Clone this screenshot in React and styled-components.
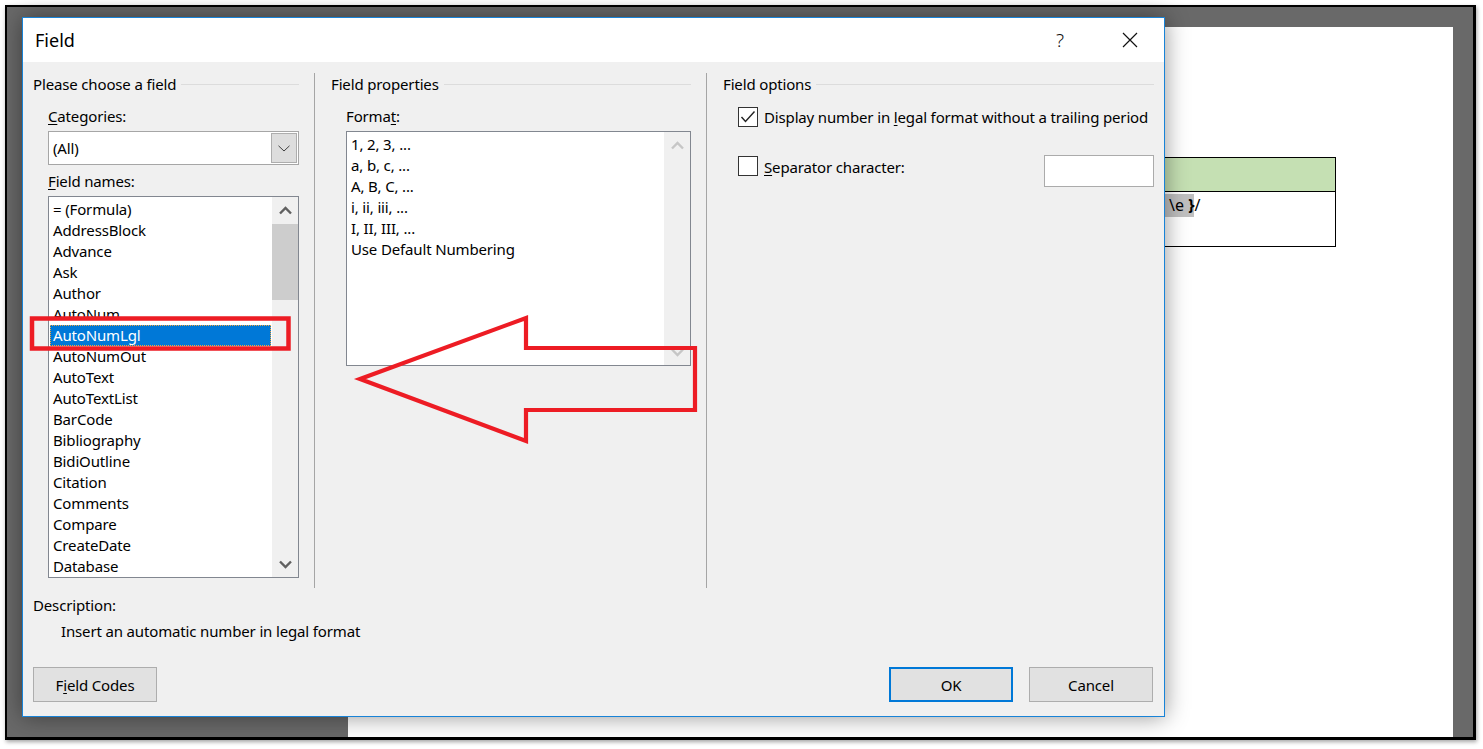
import React from 'react';
import styled, { createGlobalStyle } from 'styled-components';

const GlobalStyle = createGlobalStyle`
  html, body { margin: 0; padding: 0; background: #ffffff; }
  body {
    width: 1483px; height: 749px; overflow: hidden;
    font-family: "Noto Sans", "Open Sans", sans-serif;
  }
  * { box-sizing: border-box; }
`;

const Screen = styled.div`
  position: relative;
  width: 1483px;
  height: 749px;
  padding: 5px 0 0 5px;
`;

const Frame = styled.div`
  position: relative;
  display: flex;
  width: 1471px;
  height: 735px;
  border: 2px solid #000;
  border-right-width: 3px;
  border-bottom-width: 3px;
  background: #696969;
  box-shadow: 1px 2px 4px rgba(0, 0, 0, 0.35);
  padding: 20px 20px 0 341px;
`;

const Page = styled.div`
  flex: 1;
  background: #ffffff;
  display: flex;
  justify-content: flex-end;
  align-items: flex-start;
  padding: 130px 117px 0 0;
`;

const DocTable = styled.table`
  border-collapse: collapse;
  width: 536px;
  font-family: "Noto Sans", sans-serif;
  font-size: 16px;
  color: #000;
`;

const HeadCell = styled.td`
  height: 34px;
  padding: 0;
  background: #c5e0b3;
  border: 1px solid #000;
`;

const BodyCell = styled.td`
  height: 55px;
  padding: 2px 0 0 0;
  vertical-align: top;
  border: 1px solid #000;
  width: ${p => p.$w || 'auto'};
`;

const FieldShade = styled.span`
  display: inline-block;
  background: #c0c0c0;
  padding: 0 0 0 4px;
  line-height: 23px;
  b { font-weight: 700; }
`;

const Dialog = styled.div`
  position: absolute;
  left: 15px;
  top: 10px;
  width: 1143px;
  height: 700px;
  border: 1px solid #1883d7;
  background: #f0f0f0;
  box-shadow: 0 0 22px rgba(0, 0, 0, 0.42);
  display: flex;
  flex-direction: column;
  font-family: "Noto Sans", "Open Sans", sans-serif;
  font-size: 15px;
  letter-spacing: -0.15px;
  color: #000;
`;

const TitleBar = styled.div`
  height: 44px;
  flex: none;
  background: #ffffff;
  display: flex;
  align-items: center;
  padding: 0 11px 0 12px;
`;

const Title = styled.div`
  font-size: 18px;
  letter-spacing: 0;
  flex: 1;
`;

const TitleButton = styled.div`
  width: 46px;
  height: 44px;
  display: flex;
  align-items: center;
  justify-content: center;
  font-size: 19px;
  font-weight: 300;
  color: #111;
  margin-left: ${p => p.$ml || 0}px;
`;

const Body = styled.div`
  flex: 1;
  display: flex;
  flex-direction: column;
  padding: 11px 10px 13px 10px;
`;

const Columns = styled.div`
  display: flex;
  height: 515px;
`;

const Group = styled.div`
  display: flex;
  flex-direction: column;
  min-width: 0;
  width: ${p => (p.$w ? `${p.$w}px` : 'auto')};
  flex: ${p => (p.$w ? 'none' : '1 1 0')};
`;

const GroupHeader = styled.div`
  display: flex;
  align-items: center;
  line-height: 20px;
  margin-top: 1px;
  white-space: nowrap;
  &::after {
    content: "";
    flex: 1;
    height: 1px;
    background: #dcdcdc;
    margin-left: 5px;
  }
`;

const Divider = styled.div`
  width: 1px;
  flex: none;
  background: #a5a5a5;
  margin: 0 16px 0 15px;
`;

const Label = styled.div`
  line-height: 20px;
  margin: ${p => p.$mt || 0}px 0 0 15px;
  u { text-decoration: underline; text-underline-offset: 2px; }
`;

const Combo = styled.div`
  margin: 5px 0 0 15px;
  height: 34px;
  border: 1px solid #a6a6a6;
  background: #ffffff;
  display: flex;
  align-items: center;
  padding: 0 1px 0 4px;
`;

const ComboText = styled.div`
  flex: 1;
  line-height: 20px;
`;

const DropButton = styled.div`
  width: 26px;
  height: 30px;
  border: 1px solid #adadad;
  background: #dddddd;
  display: flex;
  align-items: center;
  justify-content: center;
`;

const ListBox = styled.div`
  margin: 5px 0 0 15px;
  height: ${p => p.$h}px;
  border: 1px solid #828790;
  background: #ffffff;
  display: flex;
  overflow: hidden;
`;

const Items = styled.div`
  flex: 1;
  padding: 2px 1px 0 1px;
  overflow: hidden;
`;

const Item = styled.div`
  height: 21px;
  line-height: 19px;
  padding-left: 2px;
  border: 1px ${p => (p.$sel ? 'dotted #f3a53c' : 'solid transparent')};
  background: ${p => (p.$sel ? '#0078d7' : 'transparent')};
  color: ${p => (p.$sel ? '#ffffff' : '#000000')};
  white-space: nowrap;
`;

const ScrollBar = styled.div`
  width: 26px;
  flex: none;
  background: #f0f0f0;
  display: flex;
  flex-direction: column;
`;

const ScrollButton = styled.div`
  height: 26px;
  flex: none;
  display: flex;
  align-items: center;
  justify-content: center;
`;

const Track = styled.div`
  flex: 1;
  padding-top: ${p => p.$offset || 0}px;
`;

const Thumb = styled.div`
  height: ${p => p.$h}px;
  background: #cdcdcd;
`;

const CheckRow = styled.div`
  display: flex;
  align-items: flex-start;
  margin: ${p => p.$mt}px 0 0 15px;
`;

const CheckBox = styled.div`
  width: 20px;
  height: 20px;
  flex: none;
  border: 1px solid #333333;
  background: #ffffff;
  margin-top: ${p => p.$mt || 0}px;
  display: flex;
  align-items: center;
  justify-content: center;
`;

const CheckLabel = styled.div`
  line-height: 20px;
  margin: ${p => p.$mt || 0}px 0 0 6px;
  white-space: nowrap;
  u { text-decoration: underline; text-underline-offset: 2px; }
`;

const TextInput = styled.div`
  margin-left: auto;
  width: 110px;
  height: 32px;
  flex: none;
  border: 1px solid #ababab;
  background: #ffffff;
`;

const DescLabel = styled.div`
  line-height: 20px;
  margin-top: 7px;
`;

const DescText = styled.div`
  line-height: 20px;
  margin-top: 6px;
  padding-left: 28px;
`;

const ButtonRow = styled.div`
  display: flex;
  margin-top: 26px;
  padding-right: 1px;
`;

const Button = styled.div`
  width: 124px;
  height: 35px;
  display: flex;
  align-items: center;
  justify-content: center;
  background: #e1e1e1;
  border: ${p => (p.$default ? '2px solid #0078d7' : '1px solid #adadad')};
  margin-left: ${p => p.$ml || '0'};
  u { text-decoration: underline; text-underline-offset: 2px; }
`;

const Overlay = styled.svg`
  position: absolute;
  left: 0;
  top: 0;
  pointer-events: none;
`;

const ChevronDown = ({ color = '#404040', w = 1 }) => (
  <svg width="12" height="7" viewBox="0 0 12 7">
    <path d="M0.5 0.8 L6 6 L11.5 0.8" fill="none" stroke={color} strokeWidth={w} />
  </svg>
);

const ScrollChevron = ({ up, color }) => (
  <svg width="13" height="9" viewBox="0 0 13 9">
    <path
      d={up ? 'M1 7.5 L6.5 2 L12 7.5' : 'M1 1.5 L6.5 7 L12 1.5'}
      fill="none"
      stroke={color}
      strokeWidth="2.4"
    />
  </svg>
);

const fieldNames = [
  '= (Formula)', 'AddressBlock', 'Advance', 'Ask', 'Author', 'AutoNum',
  'AutoNumLgl', 'AutoNumOut', 'AutoText', 'AutoTextList', 'BarCode',
  'Bibliography', 'BidiOutline', 'Citation', 'Comments', 'Compare',
  'CreateDate', 'Database',
];

const formats = ['1, 2, 3, ...', 'a, b, c, ...', 'A, B, C, ...', 'i, ii, iii, ...', 'I, II, III, ...', 'Use Default Numbering'];

export default function App() {
  return (
    <Screen>
      <GlobalStyle />
      <Frame>
        <Page>
          <DocTable>
            <tbody>
              <tr>
                <HeadCell colSpan={2} />
              </tr>
              <tr>
                <BodyCell $w="364px">{'{ AUTONUMLGL '}</BodyCell>
                <BodyCell>
                  <FieldShade>\e <b>{'}'}</b></FieldShade>/
                </BodyCell>
              </tr>
            </tbody>
          </DocTable>
        </Page>

        <Dialog>
          <TitleBar>
            <Title>Field</Title>
            <TitleButton>?</TitleButton>
            <TitleButton $ml={24}>
              <svg width="16" height="16" viewBox="0 0 16 16">
                <path d="M1 1 L15 15 M15 1 L1 15" stroke="#111" strokeWidth="1.2" />
              </svg>
            </TitleButton>
          </TitleBar>

          <Body>
            <Columns>
              <Group $w={266}>
                <GroupHeader>Please choose a field</GroupHeader>
                <Label $mt={12}><u>C</u>ategories:</Label>
                <Combo>
                  <ComboText>(All)</ComboText>
                  <DropButton><ChevronDown /></DropButton>
                </Combo>
                <Label $mt={6}><u>F</u>ield names:</Label>
                <ListBox $h={382}>
                  <Items>
                    {fieldNames.map(n => (
                      <Item key={n} $sel={n === 'AutoNumLgl'}>{n}</Item>
                    ))}
                  </Items>
                  <ScrollBar>
                    <ScrollButton><ScrollChevron up color="#606060" /></ScrollButton>
                    <Track $offset={1}><Thumb $h={76} /></Track>
                    <ScrollButton><ScrollChevron color="#606060" /></ScrollButton>
                  </ScrollBar>
                </ListBox>
              </Group>

              <Divider />

              <Group $w={360}>
                <GroupHeader>Field properties</GroupHeader>
                <Label $mt={12}>Forma<u>t</u>:</Label>
                <ListBox $h={235}>
                  <Items>
                    {formats.map(f => (
                      <Item key={f}>{f}</Item>
                    ))}
                  </Items>
                  <ScrollBar>
                    <ScrollButton><ScrollChevron up color="#c6c6c6" /></ScrollButton>
                    <Track />
                    <ScrollButton><ScrollChevron color="#c6c6c6" /></ScrollButton>
                  </ScrollBar>
                </ListBox>
              </Group>

              <Divider />

              <Group>
                <GroupHeader>Field options</GroupHeader>
                <CheckRow $mt={13}>
                  <CheckBox>
                    <svg width="16" height="14" viewBox="0 0 16 14">
                      <path d="M1.5 7 L5.5 11.5 L14.5 1.5" fill="none" stroke="#222" strokeWidth="1.4" />
                    </svg>
                  </CheckBox>
                  <CheckLabel>Display number in <u>l</u>egal format without a trailing period</CheckLabel>
                </CheckRow>
                <CheckRow $mt={28}>
                  <CheckBox $mt={1} />
                  <CheckLabel $mt={2}><u>S</u>eparator character:</CheckLabel>
                  <TextInput />
                </CheckRow>
              </Group>
            </Columns>

            <DescLabel>Description:</DescLabel>
            <DescText>Insert an automatic number in legal format</DescText>

            <ButtonRow>
              <Button>F<u>i</u>eld Codes</Button>
              <Button $default $ml="auto">OK</Button>
              <Button $ml="16px">Cancel</Button>
            </ButtonRow>
          </Body>
        </Dialog>
      </Frame>

      <Overlay width="1483" height="749" viewBox="0 0 1483 749">
        <rect x="32" y="318.5" width="256.5" height="30" fill="none" stroke="#ed1c24" strokeWidth="4.5" />
        <polygon
          points="360,379 526,318 526,348 695,348 695,410 526,410 526,441"
          fill="none"
          stroke="#ed1c24"
          strokeWidth="4.2"
        />
      </Overlay>
    </Screen>
  );
}
